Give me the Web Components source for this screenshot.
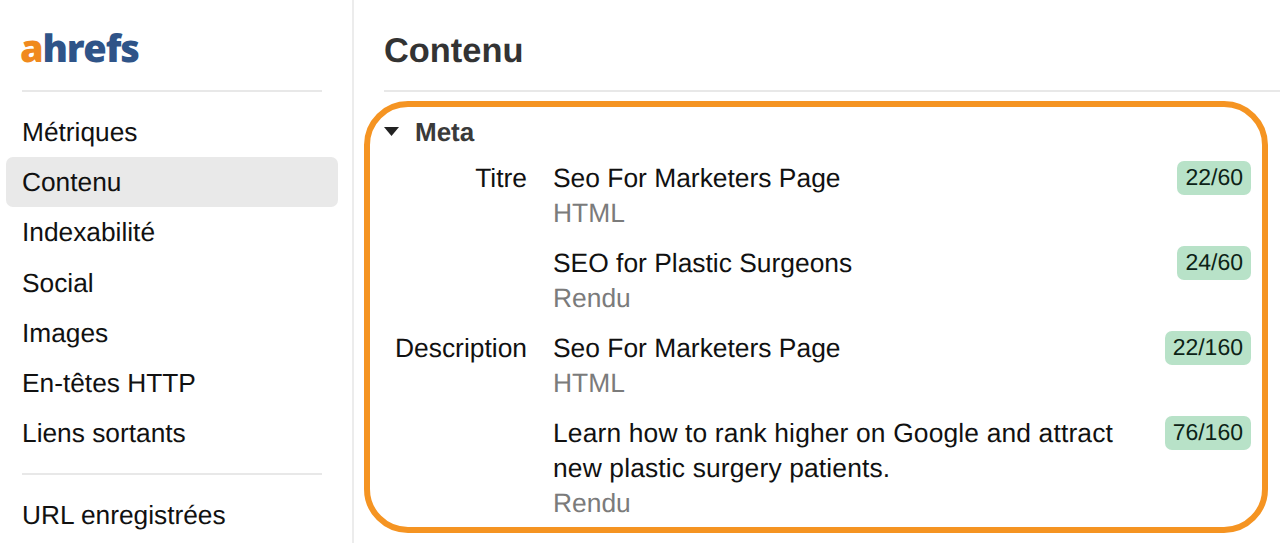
<!DOCTYPE html>
<html lang="fr">
<head>
<meta charset="utf-8">
<title>Contenu</title>
<style>
  html, body { margin: 0; height: 543px; overflow: hidden; background: #fff; }
  body { font-family: "Liberation Sans", Arial, sans-serif; color: #111; text-rendering: geometricPrecision; }
  #app { display: flex; height: 543px; }
</style>
</head>
<body>
<div id="app">
  <seo-sidebar>
    <side-item>Métriques</side-item>
    <side-item active>Contenu</side-item>
    <side-item>Indexabilité</side-item>
    <side-item>Social</side-item>
    <side-item>Images</side-item>
    <side-item>En-têtes HTTP</side-item>
    <side-item>Liens sortants</side-item>
    <side-item slot="bottom">URL enregistrées</side-item>
  </seo-sidebar>
  <content-view heading="Contenu">
    <meta-panel heading="Meta">
      <meta-row label="Titre" source="HTML" count="22/60">Seo For Marketers Page</meta-row>
      <meta-row source="Rendu" count="24/60">SEO for Plastic Surgeons</meta-row>
      <meta-row label="Description" source="HTML" count="22/160">Seo For Marketers Page</meta-row>
      <meta-row source="Rendu" count="76/160"><span style="letter-spacing:.15px">Learn how to rank higher on Google and attract new plastic surgery patients.</span></meta-row>
    </meta-panel>
  </content-view>
</div>

<script>
class SeoSidebar extends HTMLElement {
  constructor() {
    super();
    this.attachShadow({ mode: "open" });
  }

  connectedCallback() {
    this.shadowRoot.innerHTML = `
      <style>
        :host {
          display: block;
          box-sizing: border-box;
          flex: 0 0 354px;
          border-right: 2px solid #ececec;
        }

        .logo {
          height: 92px;
          margin: 0 30px 0 22px;
          box-sizing: border-box;
          padding-top: 26px;
          font-family: "Open Sans", sans-serif;
          font-weight: 800;
          font-size: 38px;
          line-height: 44px;
          letter-spacing: -1.2px;
          color: #2f5488;
          border-bottom: 2px solid #e8e8e8;
        }

        .logo span { color: #f08a1d; margin-left: -2px; }

        nav {
          padding: 15px 14px 14.7px 6px;
        }

        .rule {
          height: 2px;
          background: #e8e8e8;
          margin: 0 30px 0 22px;
        }

        .bottom { padding-top: 15px; padding-bottom: 0; }
      </style>

      <div class="logo"><span>a</span>hrefs</div>
      <nav><slot></slot></nav>
      <div class="rule"></div>
      <nav class="bottom"><slot name="bottom"></slot></nav>
    `;
  }
}

class SideItem extends HTMLElement {
  constructor() {
    super();
    this.attachShadow({ mode: "open" });
    this.shadowRoot.innerHTML = `
      <style>
        :host {
          display: block;
          height: 50.2px;
          line-height: 50.2px;
          padding-left: 16px;
          font-size: 26.3px;
          color: #111;
          border-radius: 7px;
        }

        :host([active]) { background: #e9e9e9; }
      </style>
      <slot></slot>
    `;
  }
}

class ContentView extends HTMLElement {
  constructor() {
    super();
    this.attachShadow({ mode: "open" });
  }

  connectedCallback() {
    this.shadowRoot.innerHTML = `
      <style>
        :host {
          display: block;
          flex: 1;
          min-width: 0;
          box-sizing: border-box;
          padding-left: 10px;
        }

        h1 {
          margin: 0 0 9px 20px;
          height: 92px;
          box-sizing: border-box;
          padding-top: 31px;
          font-size: 34.4px;
          line-height: 40px;
          font-weight: 700;
          color: #333;
          border-bottom: 2px solid #e8e8e8;
        }
      </style>

      <h1>${this.getAttribute("heading")}</h1>
      <slot></slot>
    `;
  }
}

class MetaPanel extends HTMLElement {
  constructor() {
    super();
    this.attachShadow({ mode: "open" });
  }

  connectedCallback() {
    this.shadowRoot.innerHTML = `
      <style>
        :host {
          display: block;
          box-sizing: border-box;
          width: 904px;
          height: 432px;
          border: 6px solid #f59422;
          border-radius: 44px;
          background: #fff;
        }

        .head {
          display: flex;
          align-items: center;
          gap: 16px;
          height: 50px;
          margin-bottom: 4px;
          padding-left: 14px;
          font-size: 26px;
          font-weight: 700;
          color: #3a3a3a;
        }

        svg { width: 15px; height: 9px; display: block; margin-top: -1px; }
      </style>

      <div class="head">
        <svg viewBox="0 0 15 9"><polygon points="0,0 15,0 7.5,9" fill="#222"/></svg>
        <span>${this.getAttribute("heading")}</span>
      </div>
      <slot></slot>
    `;
  }
}

class MetaRow extends HTMLElement {
  constructor() {
    super();
    this.attachShadow({ mode: "open" });
  }

  connectedCallback() {
    this.shadowRoot.innerHTML = `
      <style>
        :host {
          display: grid;
          grid-template-columns: 157px 1fr auto;
          column-gap: 26px;
          padding: 0 11px 15px 0;
          font-size: 26.4px;
          line-height: 35px;
          color: #111;
        }

        .label { text-align: right; }

        .value { max-width: 580px; }

        .source { color: #7b7b7b; }

        .count {
          height: 34px;
          line-height: 33px;
          padding: 0 8px;
          font-size: 23px;
          color: #0c2216;
          background: #b8e2c8;
          border-radius: 7px;
        }
      </style>

      <div class="label">${this.getAttribute("label") || ""}</div>
      <div>
        <div class="value"><slot></slot></div>
        <div class="source">${this.getAttribute("source")}</div>
      </div>
      <div class="count">${this.getAttribute("count")}</div>
    `;
  }
}

customElements.define("seo-sidebar", SeoSidebar);
customElements.define("side-item", SideItem);
customElements.define("content-view", ContentView);
customElements.define("meta-panel", MetaPanel);
customElements.define("meta-row", MetaRow);
</script>
</body>
</html>
